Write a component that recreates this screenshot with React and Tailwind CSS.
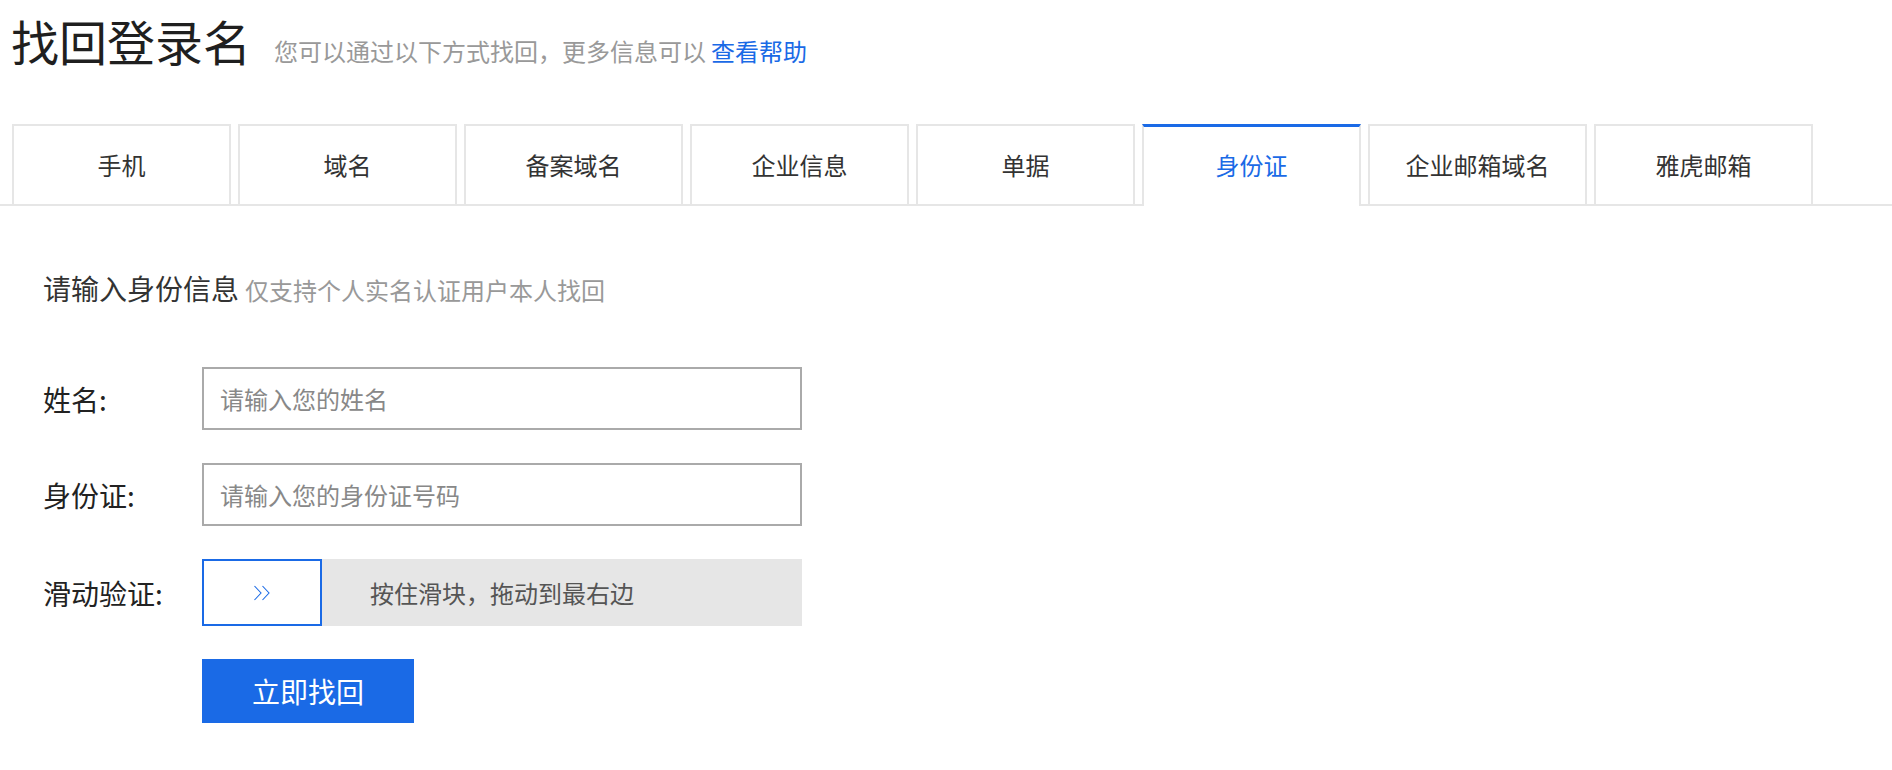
import { useState } from 'react';

const tabs = ['手机', '域名', '备案域名', '企业信息', '单据', '身份证', '企业邮箱域名', '雅虎邮箱'];

function Chevrons() {
  return (
    <svg width="18" height="16" viewBox="0 0 18 16" fill="none" stroke="#1a6ae6" strokeWidth="1.1">
      <path d="M1.5 1 L8 8 L1.5 15" />
      <path d="M9.5 1 L16 8 L9.5 15" />
    </svg>
  );
}

export default function App() {
  const [active, setActive] = useState(5);

  return (
    <div className="min-h-[770px] bg-white text-[#333]" style={{ fontFamily: '"Noto Sans CJK SC", "Noto Sans", sans-serif' }}>
      {/* header */}
      <div className="h-[124px] pt-[16px] pl-[11px] flex items-baseline">
        <h1 className="text-[48px] leading-none text-[#1f1f1f] font-normal">找回登录名</h1>
        <p className="ml-[23px] text-[24px] leading-none text-[#999]">
          您可以通过以下方式找回，更多信息可以
          <a className="ml-[5px] text-[#1a6ae6]">查看帮助</a>
        </p>
      </div>

      {/* tabs */}
      <div className="flex gap-[7px] pl-[12px] border-b-2 border-[#e6e6e6]">
        {tabs.map((t, i) =>
          i === active ? (
            <div
              key={t}
              onClick={() => setActive(i)}
              className="w-[219px] -mb-[2px] h-[82px] bg-white border-x-2 border-[#e6e6e6] border-t-[3px] border-t-[#1a6ae6] flex items-center justify-center text-[24px] text-[#1a6ae6] cursor-pointer"
            >
              <span className="-mt-[3px]">{t}</span>
            </div>
          ) : (
            <div
              key={t}
              onClick={() => setActive(i)}
              className="w-[219px] h-[80px] bg-white border-2 border-b-0 border-[#e6e6e6] flex items-center justify-center text-[24px] text-[#333] cursor-pointer"
            >
              {t}
            </div>
          )
        )}
      </div>

      {/* form */}
      <div className="pl-[43px]">
        <div className="mt-[68px] flex items-baseline leading-none">
          <span className="text-[28px] text-[#333]">请输入身份信息</span>
          <span className="ml-[6px] text-[24px] text-[#999]">仅支持个人实名认证用户本人找回</span>
        </div>

        <div className="mt-[65px] flex flex-col gap-[33px]">
          <div className="flex items-center">
            <label className="w-[159px] text-[28px] text-[#222]">姓名:</label>
            <input
              className="w-[600px] h-[63px] border-2 border-[#aaa] px-[16px] text-[24px] outline-none placeholder:text-[#888]"
              placeholder="请输入您的姓名"
            />
          </div>
          <div className="flex items-center">
            <label className="w-[159px] text-[28px] text-[#222]">身份证:</label>
            <input
              className="w-[600px] h-[63px] border-2 border-[#aaa] px-[16px] text-[24px] outline-none placeholder:text-[#888]"
              placeholder="请输入您的身份证号码"
            />
          </div>
          <div className="flex items-center">
            <label className="w-[159px] text-[28px] text-[#222]">滑动验证:</label>
            <div className="w-[600px] h-[67px] bg-[#e6e6e6] flex items-center">
              <div className="w-[120px] h-full border-2 border-[#1a6ae6] bg-white flex items-center justify-center">
                <Chevrons />
              </div>
              <span className="ml-[48px] text-[24px] text-[#555]">按住滑块，拖动到最右边</span>
            </div>
          </div>
          <div className="flex">
            <div className="w-[159px]" />
            <button className="w-[212px] h-[64px] bg-[#1a6ae6] text-white text-[28px]">立即找回</button>
          </div>
        </div>
      </div>
    </div>
  );
}
